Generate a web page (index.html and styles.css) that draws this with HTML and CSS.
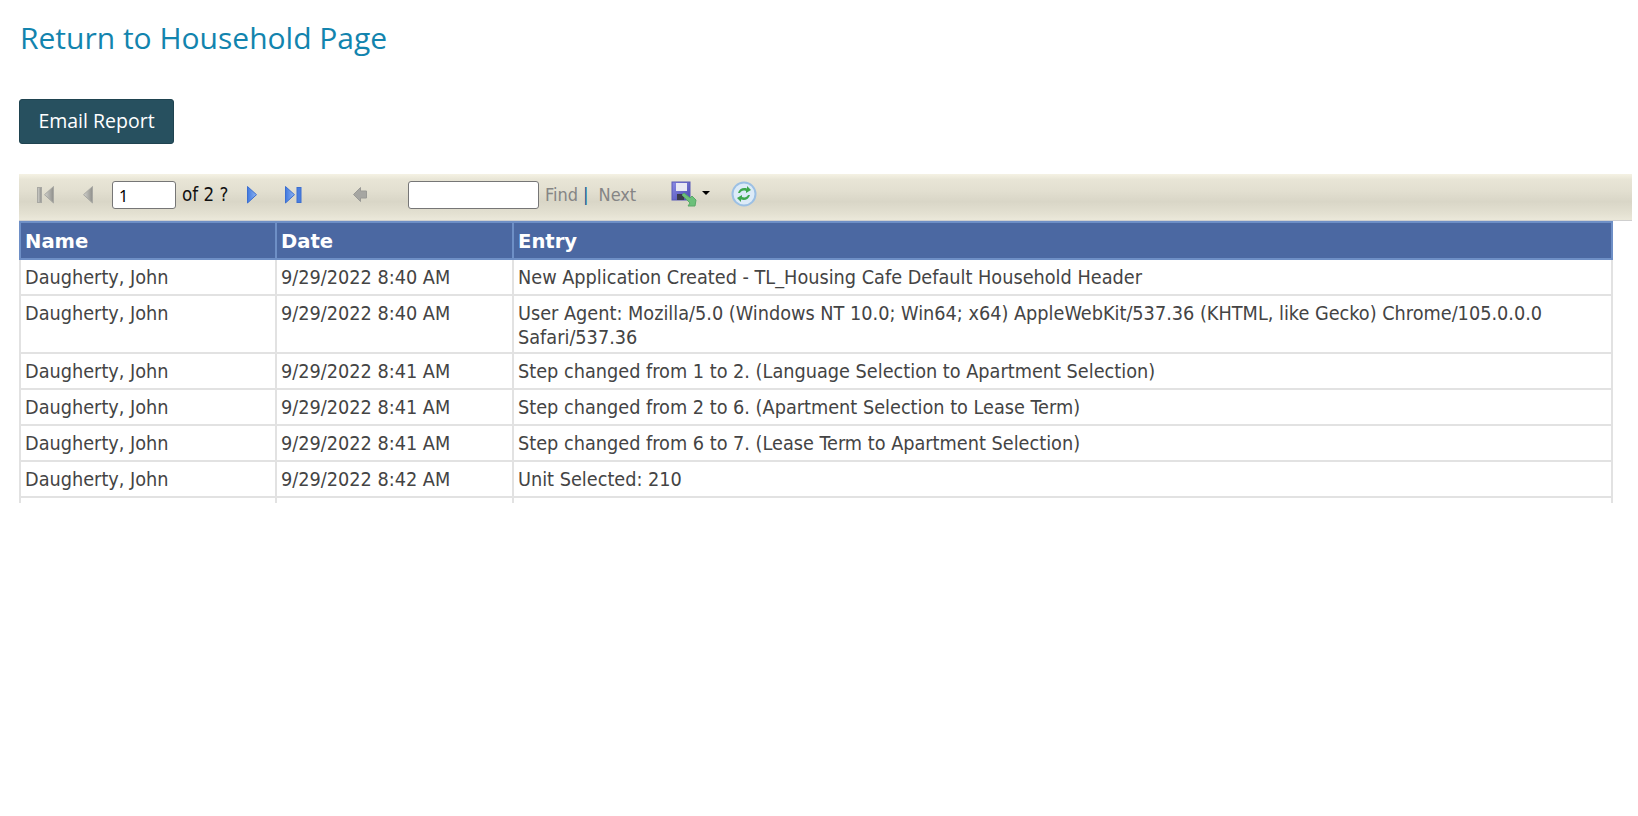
FILE: index.html
```html
<!DOCTYPE html>
<html lang="en">
<head>
<meta charset="utf-8">
<title>Household Report</title>
<link rel="stylesheet" href="styles.css">
</head>
<body>
<h1 class="return"><a href="#">Return to Household Page</a></h1>
<button class="email" type="button">Email Report</button>
<div class="toolbar">
  <svg class="ico first" width="20" height="20" viewBox="0 0 20 20"><defs><linearGradient id="g1" x1="0" x2="1" y1="0" y2="0"><stop offset="0" stop-color="#d2d2cd"/><stop offset="1" stop-color="#8f8f8b"/></linearGradient></defs><rect x="2.500" y="3.500" width="4" height="15" fill="url(#g1)" stroke="#a8a8a3"/><path d="M18.500 2.500V19L9.500 10.700Z" fill="url(#g1)" stroke="#a8a8a3"/></svg>
  <svg class="ico prev" width="12" height="20" viewBox="0 0 12 20"><path d="M10.500 2.500V19L1.500 10.700Z" fill="url(#g1)" stroke="#a8a8a3"/></svg>
  <input class="page" type="text" value="1">
  <span class="of">of 2 ?</span>
  <svg class="ico next" width="12" height="20" viewBox="0 0 12 20"><defs><linearGradient id="g2" x1="0" x2="1" y1="0" y2="0"><stop offset="0" stop-color="#3f78e0"/><stop offset="1" stop-color="#8fb4f0"/></linearGradient></defs><path d="M1.500 2.500V19L10.500 10.700Z" fill="url(#g2)" stroke="#3c6fd0"/></svg>
  <svg class="ico last" width="20" height="20" viewBox="0 0 20 20"><path d="M1.500 2.500V19L10.500 10.700Z" fill="url(#g2)" stroke="#3c6fd0"/><rect x="13" y="3.500" width="4" height="15" fill="#4a7ede" stroke="#3c6fd0"/></svg>
  <svg class="ico back" width="18" height="20" viewBox="0 0 18 20"><path d="M1.500 10.500L8.500 3.500V7H14.500V14H8.500V17.500Z" fill="#a6a6a2" stroke="#9a9a96"/></svg>
  <input class="search" type="text">
  <span class="link find-link">Find</span><span class="sep">|</span><span class="link">Next</span>
  <svg class="ico save" width="26" height="26" viewBox="0 0 26 26"><defs><linearGradient id="g3" x1="0" x2="1" y1="0" y2="1"><stop offset="0" stop-color="#8a8ae6"/><stop offset="1" stop-color="#4a4ab0"/></linearGradient></defs><rect x="1" y="1" width="18" height="18" fill="url(#g3)" stroke="#5a5ab8"/><rect x="5" y="2" width="11" height="8" fill="#e8e8f4"/><rect x="6" y="13" width="7" height="6" fill="#3c3c4c"/><path d="M11 14L13 12L19 17L21 15L25 19L24 25L17 25L19 22Z" fill="#6cc07a" stroke="#5aa868"/></svg>
  <span class="caret"></span>
  <svg class="ico refresh" width="26" height="26" viewBox="0 0 26 26"><circle cx="13" cy="13" r="11.500" fill="#dcebf8" stroke="#9cc0e4" stroke-width="2"/><path d="M7 12C8 8 12 6 16 7.500V5L20 9L15 12V10C12 9 10 10 9 12Z" fill="#3ea84e"/><path d="M19 14C18 18 14 20 10 18.500V21L6 17L11 14V16C14 17 16 16 17 14Z" fill="#3ea84e"/></svg>
</div>
<div class="report">
<table>
  <thead><tr><th class="c-name">Name</th><th class="c-date">Date</th><th>Entry</th></tr></thead>
  <tbody>
    <tr><td>Daugherty, John</td><td>9/29/2022 8:40 AM</td><td>New Application Created - TL_Housing Cafe Default Household Header</td></tr>
    <tr><td>Daugherty, John</td><td>9/29/2022 8:40 AM</td><td>User Agent: Mozilla/5.0 (Windows NT 10.0; Win64; x64) AppleWebKit/537.36 (KHTML, like Gecko) Chrome/105.0.0.0 Safari/537.36</td></tr>
    <tr><td>Daugherty, John</td><td>9/29/2022 8:41 AM</td><td>Step changed from 1 to 2. (Language Selection to Apartment Selection)</td></tr>
    <tr><td>Daugherty, John</td><td>9/29/2022 8:41 AM</td><td>Step changed from 2 to 6. (Apartment Selection to Lease Term)</td></tr>
    <tr><td>Daugherty, John</td><td>9/29/2022 8:41 AM</td><td>Step changed from 6 to 7. (Lease Term to Apartment Selection)</td></tr>
    <tr><td>Daugherty, John</td><td>9/29/2022 8:42 AM</td><td>Unit Selected: 210</td></tr>
    <tr><td>&nbsp;</td><td>&nbsp;</td><td>&nbsp;</td></tr>
  </tbody>
</table>
</div>
</body>
</html>
```
FILE: styles.css
```css
html, body { margin: 0; padding: 0; background: #fff; }
body { height: 816px; overflow: hidden; font-family: "DejaVu Sans Condensed", "DejaVu Sans", sans-serif; font-stretch: condensed; }
.return { margin: 0; padding: 18px 0 0 20px; font: 400 30px/40px "Open Sans", sans-serif; }
.return a { color: #1284ae; text-decoration: none; }
.email { display: block; margin: 41px 0 0 19px; width: 155px; height: 45px; padding: 0 0 3px; background: #27505f; color: #fff; border: 1px solid #1f4350; border-radius: 3px; font: 400 19.500px "Open Sans", sans-serif; }
.toolbar { display: flex; align-items: center; margin: 30px 0 0 19px; width: 1613px; height: 47px; box-sizing: border-box; padding-bottom: 5px; border-bottom: 1px solid #cfcfcf; background: linear-gradient(#f5f2e4 0, #e8e5d6 12%, #e3e0d1 35%, #d9d6c7 60%, #e3e0d1 85%, #ebe8da 100%); }
.ico { display: block; flex: none; margin-bottom: 2px; }
.first { margin-left: 16px; }
.prev { margin-left: 27px; }
.page { flex: none; width: 64px; height: 28px; box-sizing: border-box; margin-left: 18px; padding: 2px 6px 0; border: 1px solid #767676; border-radius: 3px; background: #fff; font: 16px "Noto Sans", sans-serif; color: #000; }
.of { flex: none; width: 46px; margin-left: 6px; font-size: 18.600px; color: #111; white-space: nowrap; }
.next { margin-left: 18px; }
.last { margin-left: 26px; }
.back { margin-left: 48px; }
.search { flex: none; width: 131px; height: 28px; box-sizing: border-box; margin-left: 38px; padding: 0; border: 1px solid #767676; border-radius: 3px; background: #fff; }
.link { flex: none; color: #858585; font-size: 18px; }
.find-link { margin-left: 6px; }
.sep { margin: 0 10px 0 5px; color: #0b5c93; font-size: 18px; }
.save { margin-left: 35px; }
.caret { margin: 0 0 3px 5px; width: 0; height: 0; border-style: solid; border-width: 4px 4px 0; border-color: #000 transparent transparent; }
.refresh { margin-left: 21px; }
.report { margin-left: 19px; width: 1594px; height: 282px; overflow: hidden; }
table { width: 1594px; border-collapse: collapse; table-layout: fixed; }
th { height: 31px; padding: 3px 4px 1px; text-align: left; background: #4b68a2; border: 2px solid #6e8fc6; color: #fff; font-family: "DejaVu Sans", sans-serif; font-stretch: normal; font-size: 19.600px; font-weight: 700; }
.c-name { width: 246px; }
.c-date { width: 227px; }
td { height: 36px; box-sizing: border-box; padding: 6px 4px 2px; border: 2px solid #e2e2e2; color: #444; font-size: 19.700px; line-height: 24px; vertical-align: top; }
```
